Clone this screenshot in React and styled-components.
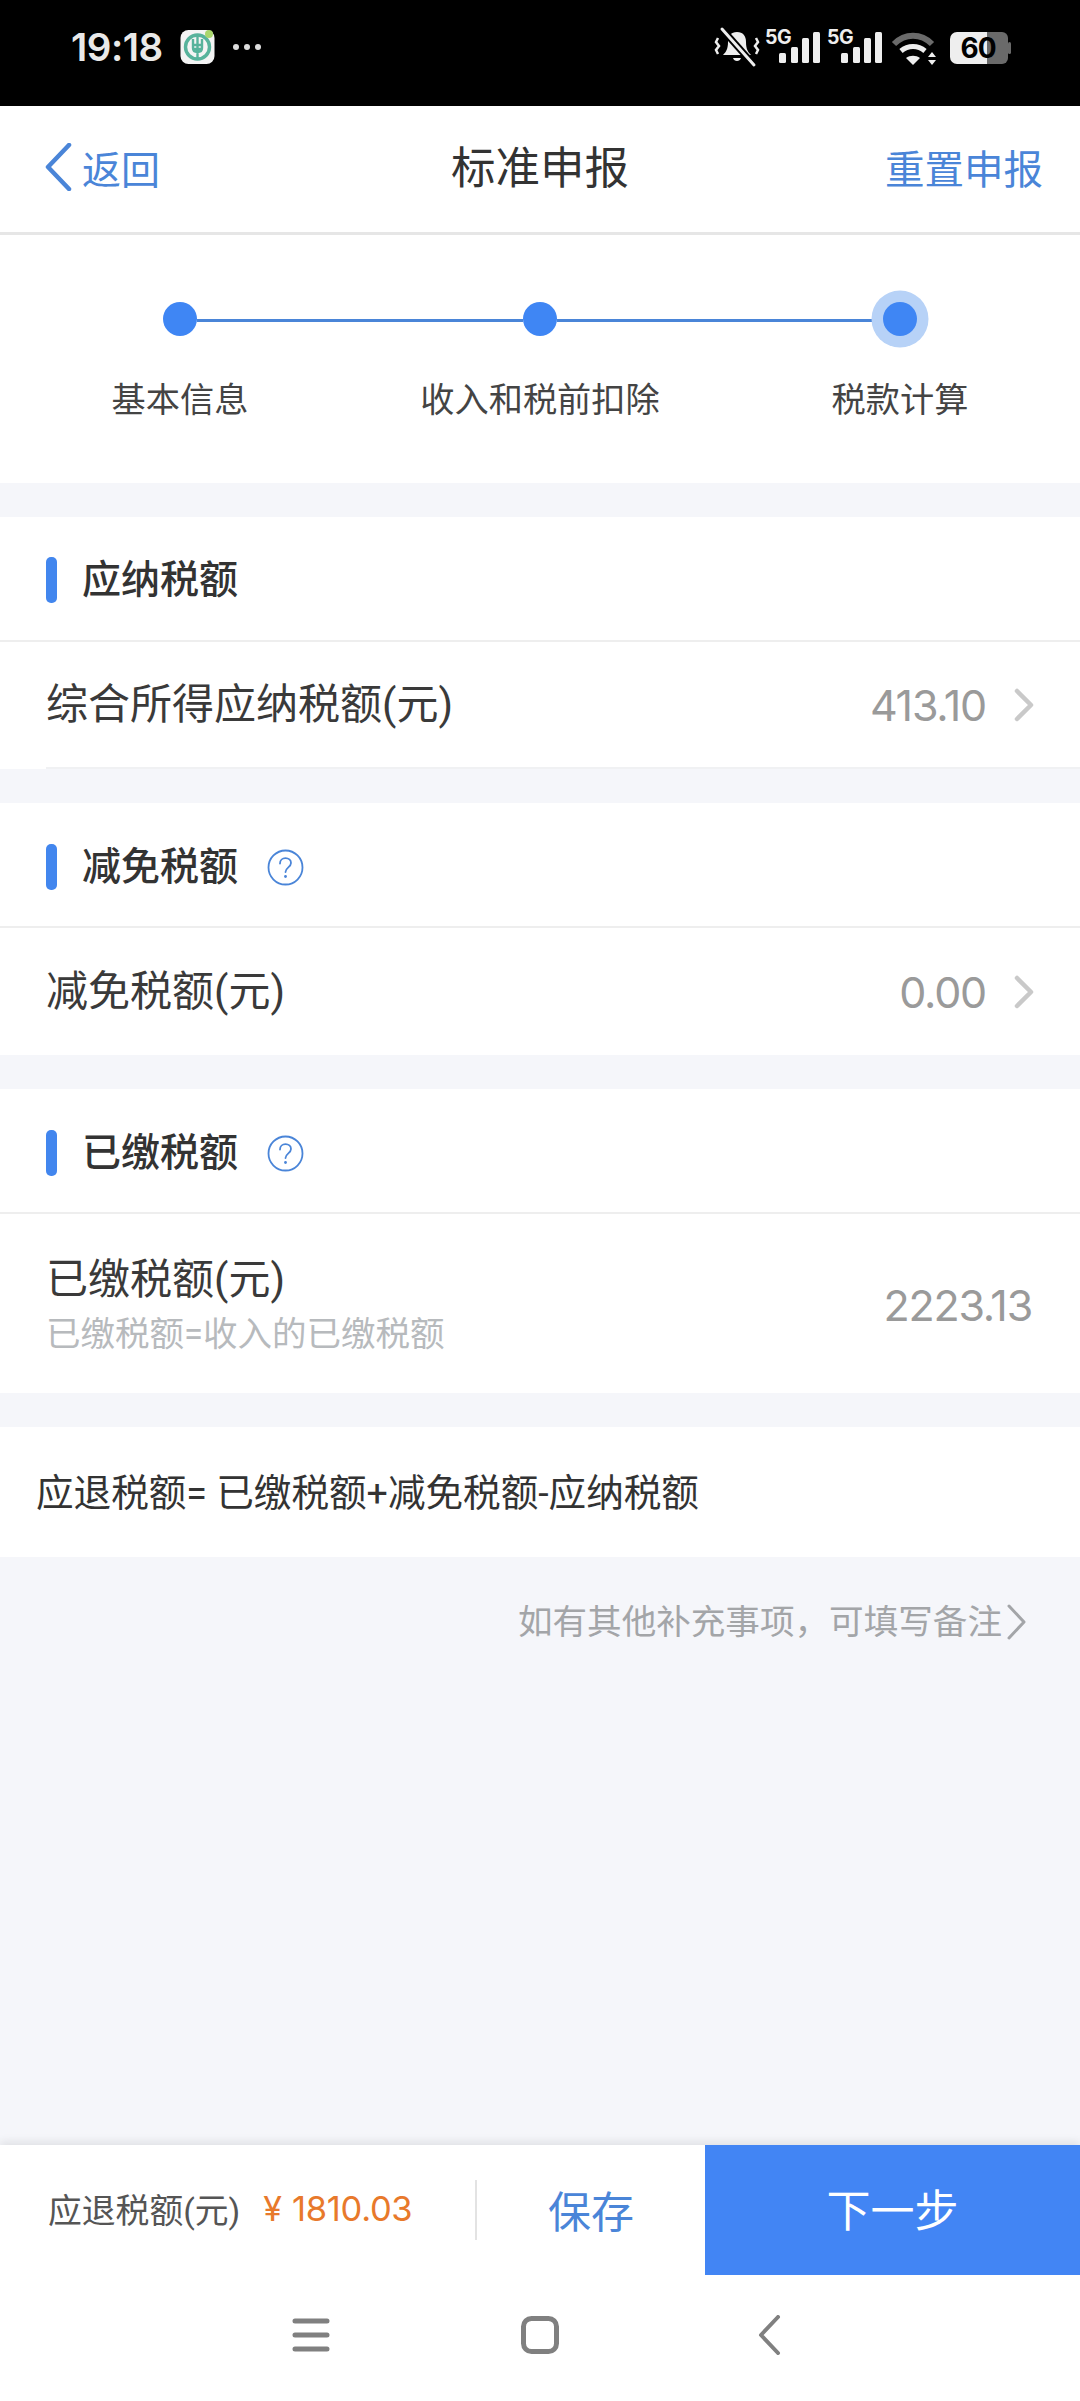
import React from "react";
import styled, { createGlobalStyle } from "styled-components";

const Global = createGlobalStyle`
  html, body { margin: 0; padding: 0; background: #f5f6fa; }
  * { box-sizing: border-box; }
  body { font-family: Roboto, "Noto Sans CJK SC", sans-serif; color: #333; }
`;
const Page = styled.div`
  width: 1080px; height: 2401px; display: flex; flex-direction: column; overflow: hidden; background: #f5f6fa;
`;
const StatusBar = styled.div`
  height: 106px; flex: none; background: #000; display: flex; align-items: flex-start; justify-content: space-between;
  padding: 28px 69px 0 71px; color: #e9e9e9;
`;
const StatusLeft = styled.div`display: flex; align-items: center; height: 38px;`;
const StatusRight = styled.div`display: flex; align-items: flex-start; height: 38px;`;
const Clock = styled.span`font: 600 38.5px/38px Inter, sans-serif; letter-spacing: -0.5px; width: 109px;`;
const StatusSvg = styled.svg`
  display: block; flex: none; overflow: visible; margin-left: ${p => p.$ml ?? 0}px; margin-top: ${p => p.$mt ?? 0}px;
`;
const Header = styled.header`
  height: 129px; flex: none; background: #fff; border-bottom: 3px solid #e6e6e6; display: grid;
  grid-template-columns: 1fr auto 1fr; align-items: center; padding: 0 37px 4px 37px;
`;
const Back = styled.div`display: flex; align-items: center; gap: 10px; color: #4a85d8; font-size: 39px; margin-left: 7px;`;
const Title = styled.h1`margin: 3px 0 0; font-size: 44.5px; font-weight: 400; color: #333; line-height: 60px;`;
const Reset = styled.div`justify-self: end; color: #4a85d8; font-size: 39.5px; margin-bottom: 2px;`;
const Steps = styled.section`
  height: 248px; flex: none; background: #fff; padding-top: 67px; margin-bottom: 34px;
`;
const Rail = styled.div`display: flex; align-items: center; padding: 0 163.500px 0 163px;`;
const Dot = styled.span`
  width: 34px; height: 34px; flex: none; border-radius: 50%; background: #3f86f4;
  box-shadow: ${p => (p.$active ? "0 0 0 11.5px #b7d2f7" : "none")};
`;
const Line = styled.span`flex: 1; height: 3px; background: #4a85d8; margin-top: 2px;`;
const Labels = styled.div`display: grid; grid-template-columns: repeat(3, 360px); margin-top: 39px;`;
const StepLabel = styled.span`text-align: center; font-size: 34.2px; line-height: 50px; color: #444;`;
const Section = styled.section`flex: none; background: #fff; margin-bottom: 34px;`;
const SectionHead = styled.div`
  height: 125px; display: flex; align-items: center; padding: ${p => p.$pt ?? 5}px 0 0 46px; border-bottom: 2px solid #eee;
`;
const Bar = styled.span`width: 11px; height: 46px; border-radius: 5px; background: #4286ee; margin-right: 25px; flex: none;`;
const SectionTitle = styled.h2`margin: 0; font-size: 39px; font-weight: 500; color: #333; line-height: 50px;`;
const Help = styled.svg`margin-left: 29px; display: block; flex: none;`;
const Row = styled.div`
  height: ${p => p.$h ?? 127}px; margin-left: 46px; padding-right: ${p => p.$pr ?? 46}px; display: flex; align-items: center; justify-content: space-between;
  border-bottom: ${p => (p.$line ? "2px solid #f0f1f3" : "0")};
`;
const Label = styled.span`font-size: 42px; color: #3a3a3a; line-height: 56px;`;
const Sub = styled.div`font-size: 34.5px; color: #b7babd; line-height: 44px; margin-top: 4px;`;
const Value = styled.span`
  display: flex; align-items: center; font: 400 43px/56px Inter, sans-serif; color: #9a9a9a; letter-spacing: -1.2px;
  margin-top: ${p => p.$mt ?? 0}px;
`;
const Chev = styled.svg`display: block; margin-left: 28px;`;
const Formula = styled.div`
  height: 130px; background: #fff; padding: 0 0 5px 36px; display: flex; align-items: center; font-size: 37.6px; color: #333; flex: none;
`;
const Note = styled.div`
  flex: 1; display: flex; justify-content: flex-end; align-items: flex-start; padding: 41px 52px 0 0; color: #a3a5a8; font-size: 34.6px; line-height: 48px;
`;
const NoteChevron = styled.svg`display: block; margin: 6px 0 0 2px;`;
const Footer = styled.footer`
  height: 130px; flex: none; background: #fff; display: flex; box-shadow: 0 -4px 8px rgba(0,0,0,.08);
`;
const Total = styled.div`width: 475px; display: flex; align-items: center; padding: 0 0 3px 48px; font-size: 33.8px; color: #555;`;
const Yen = styled.span`margin-left: 23px; color: #e8792b; font: 400 34px Inter, sans-serif;`;
const Amount = styled.span`margin-left: 10px; color: #e8792b; font: 400 34.500px Inter, sans-serif; letter-spacing: -.3px;`;
const Divider = styled.span`width: 2px; height: 60px; background: #e3e3e3; align-self: center;`;
const Save = styled.div`width: 228px; display: flex; justify-content: center; align-items: center; font-size: 43px; color: #4a85d8; padding-bottom: 3px;`;
const Next = styled.div`flex: 1; background: #4285f4; color: #fff; font-size: 44px; display: flex; align-items: center; justify-content: center; padding-bottom: 5px;`;
const NavBar = styled.nav`
  height: 126px; flex: none; background: #fff; display: grid; grid-template-columns: repeat(3, 38px); gap: 191px;
  justify-content: center; align-items: center; padding: 0 0 6px 0;
`;
const NavIcon = styled.svg`display: block; margin-left: ${p => p.$ml ?? 0}px;`;

const Signal = ({ ml }) => (
  <StatusSvg width="55" height="36" viewBox="0 0 55 36" $ml={ml}>
    <text x="0" y="16" fill="#eee" fontFamily="Inter, sans-serif" fontWeight="700" fontSize="19.5" letterSpacing="-0.5">5G</text>
    {[[14, 25], [26, 19], [37, 10], [48, 4]].map(([x, y]) => (
      <rect key={x} x={x} y={y} width="7" height={35 - y} rx="1.5" fill="#eee" />
    ))}
  </StatusSvg>
);

const HelpIcon = () => (
  <Help width="37" height="37" viewBox="0 0 37 37">
    <circle cx="18.5" cy="18.5" r="17" fill="none" stroke="#4a85d8" strokeWidth="1.8" />
    <path d="M13 14.5c0-3.2 2.4-5.3 5.5-5.3s5.5 2 5.5 4.8c0 4.3-5.5 4.4-5.5 9" fill="none" stroke="#4a85d8" strokeWidth="1.8" strokeLinecap="round" />
    <circle cx="18.5" cy="27.5" r="1.4" fill="#4a85d8" />
  </Help>
);
const RowChevron = () => (
  <Chev width="20" height="34" viewBox="0 0 20 34">
    <path d="M3 3l14 14L3 31" fill="none" stroke="#c9c9c9" strokeWidth="4.500" strokeLinecap="round" strokeLinejoin="round" />
  </Chev>
);

export default function App() {
  return (
    <Page>
      <Global />
      <StatusBar>
        <StatusLeft>
          <Clock>19:18</Clock>
          <StatusSvg width="36" height="36" viewBox="0 0 36 36">
            <rect x="0.5" y="1" width="34" height="34" rx="8" fill="#f4f4f4" />
            <circle cx="17.5" cy="18" r="12" fill="none" stroke="#57b39c" strokeWidth="3.4" />
            <path d="M13 10v9c0 3 2 4 4.500 4s4.500-1 4.500-4v-9M17.500 7v22M13 16h9M13 20h9" fill="none" stroke="#57b39c" strokeWidth="2.400" />
            <circle cx="29" cy="5" r="4" fill="#a9d66c" />
          </StatusSvg>
          <StatusSvg width="30" height="8" viewBox="0 0 30 8" $ml={16}>
            <circle cx="4" cy="4" r="3" fill="#ddd" /><circle cx="15" cy="4" r="3" fill="#ddd" /><circle cx="26" cy="4" r="3" fill="#ddd" />
          </StatusSvg>
        </StatusLeft>
        <StatusRight>
          <StatusSvg width="44" height="38" viewBox="0 0 44 38">
            <path d="M22 4c-6 0-9 4-9 10 0 7-2 10-5 13h28c-3-3-5-6-5-13 0-6-3-10-9-10zM18 30h8c-1 4-7 4-8 0z" fill="#eee" />
            <path d="M7 1l32 36" stroke="#000" strokeWidth="7" />
            <path d="M7 1l32 36" stroke="#eee" strokeWidth="3" strokeLinecap="round" />
            <path d="M3 10L1 14l3 4-3 4 2 4M41 10l2 4-3 4 3 4-2 4" fill="none" stroke="#eee" strokeWidth="2.500" />
          </StatusSvg>
          <Signal ml={6} />
          <Signal ml={7} />
          <StatusSvg width="46" height="36" viewBox="0 0 46 36" $ml={10} $mt={3}>
            <path d="M2 13C13 2 29 2 40 13" fill="none" stroke="#6b6b6b" strokeWidth="6" />
            <path d="M9 20c7-6 17-6 24 0" fill="none" stroke="#eee" strokeWidth="5" />
            <path d="M14 27c4-3 10-3 14 0l-7 7z" fill="#eee" />
            <path d="M40 21l4 5h-8zM40 34l4-5h-8z" fill="#eee" />
          </StatusSvg>
          <StatusSvg width="62" height="34" viewBox="0 0 62 34" $ml={11} $mt={3}>
            <path d="M38 1h15a6 6 0 0 1 6 6v20a6 6 0 0 1-6 6H38z" fill="#6a6a6a" />
            <rect x="59" y="11" width="3" height="12" rx="1.500" fill="#6a6a6a" />
            <path d="M38 1H8a7 7 0 0 0-7 7v18a7 7 0 0 0 7 7h30z" fill="#eee" />
            <text x="29" y="27" textAnchor="middle" fill="#000" fontFamily="Inter, sans-serif" fontWeight="700" fontSize="28" letterSpacing="-1">60</text>
          </StatusSvg>
        </StatusRight>
      </StatusBar>

      <Header>
        <Back>
          <svg width="28" height="48" viewBox="0 0 28 48">
            <path d="M25 2L4 24l21 22" fill="none" stroke="#4a85d8" strokeWidth="4.500" strokeLinecap="round" strokeLinejoin="round" />
          </svg>
          返回
        </Back>
        <Title>标准申报</Title>
        <Reset>重置申报</Reset>
      </Header>

      <Steps>
        <Rail>
          <Dot /><Line /><Dot /><Line /><Dot $active />
        </Rail>
        <Labels>
          <StepLabel>基本信息</StepLabel>
          <StepLabel>收入和税前扣除</StepLabel>
          <StepLabel>税款计算</StepLabel>
        </Labels>
      </Steps>

      <Section>
        <SectionHead $pt={2}><Bar /><SectionTitle>应纳税额</SectionTitle></SectionHead>
        <Row $line>
          <Label>综合所得应纳税额(元)</Label>
          <Value>413.10<RowChevron /></Value>
        </Row>
      </Section>

      <Section>
        <SectionHead><Bar /><SectionTitle>减免税额</SectionTitle><HelpIcon /></SectionHead>
        <Row>
          <Label>减免税额(元)</Label>
          <Value>0.00<RowChevron /></Value>
        </Row>
      </Section>

      <Section>
        <SectionHead><Bar /><SectionTitle>已缴税额</SectionTitle><HelpIcon /></SectionHead>
        <Row $h={179} $pr={48}>
          <div>
            <Label>已缴税额(元)</Label>
            <Sub>已缴税额=收入的已缴税额</Sub>
          </div>
          <Value $mt={3}>2223.13</Value>
        </Row>
      </Section>

      <Formula>应退税额= 已缴税额+减免税额-应纳税额</Formula>
      <Note>
        如有其他补充事项，可填写备注
        <NoteChevron width="24" height="36" viewBox="0 0 24 36">
          <path d="M5 2l15 16L5 34" fill="none" stroke="#a3a5a8" strokeWidth="3" strokeLinejoin="round" strokeLinecap="round" />
        </NoteChevron>
      </Note>

      <Footer>
        <Total>应退税额(元)<Yen>¥</Yen><Amount>1810.03</Amount></Total>
        <Divider />
        <Save>保存</Save>
        <Next>下一步</Next>
      </Footer>
      <NavBar>
        <NavIcon width="38" height="36" viewBox="0 0 38 36">
          <path d="M3 4h32M3 18h32M3 32h32" stroke="#808080" strokeWidth="5" strokeLinecap="round" />
        </NavIcon>
        <NavIcon width="38" height="38" viewBox="0 0 38 38">
          <rect x="2.500" y="2.500" width="33" height="33" rx="8" fill="none" stroke="#808080" strokeWidth="5" />
        </NavIcon>
        <NavIcon width="24" height="40" viewBox="0 0 24 40" $ml={7}>
          <path d="M21 2L4 20l17 18" fill="none" stroke="#808080" strokeWidth="4" strokeLinecap="round" strokeLinejoin="round" />
        </NavIcon>
      </NavBar>
    </Page>
  );
}
